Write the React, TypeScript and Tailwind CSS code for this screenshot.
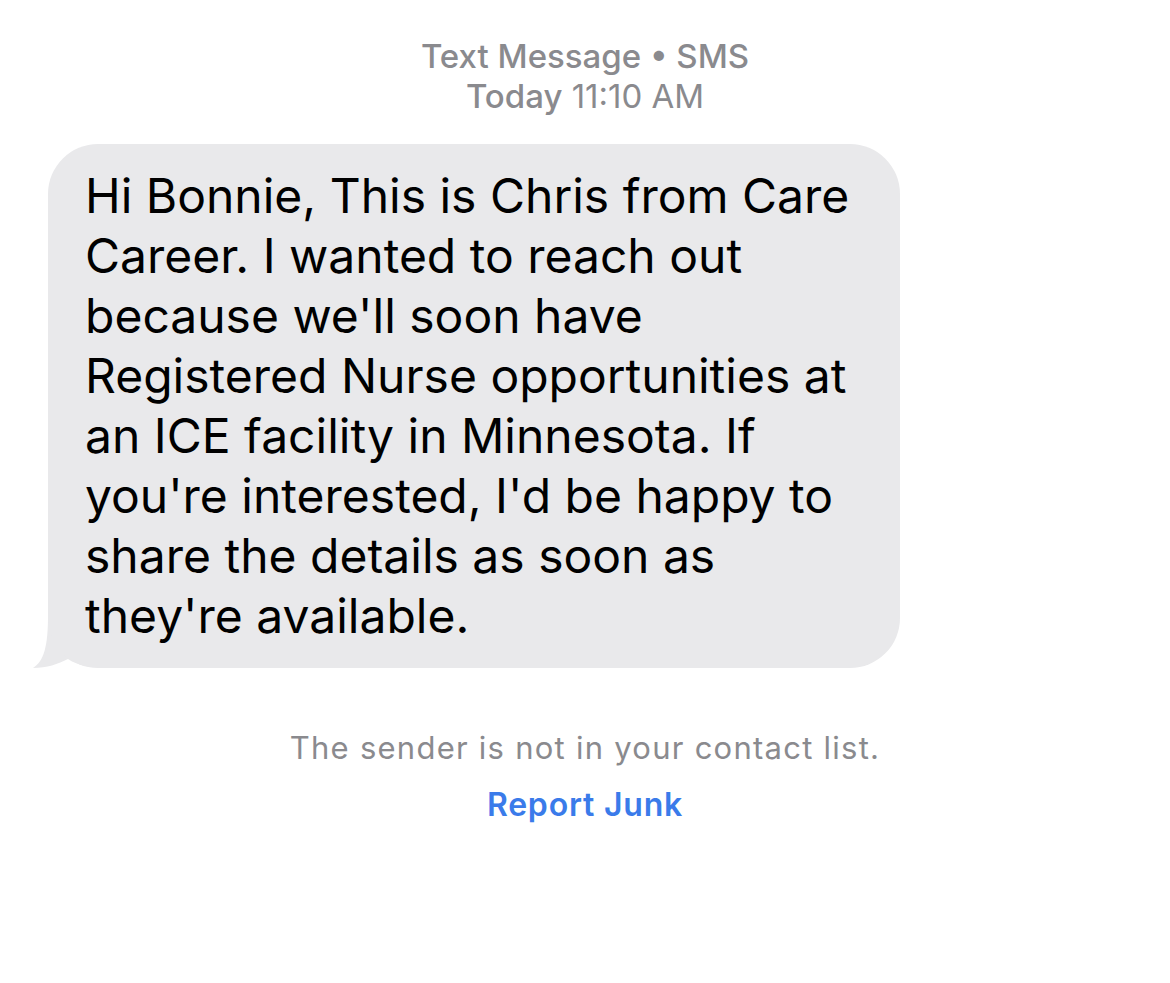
import React from "react";

const lines = [
  "Hi Bonnie, This is Chris from Care",
  "Career. I wanted to reach out",
  "because we'll soon have",
  "Registered Nurse opportunities at",
  "an ICE facility in Minnesota. If",
  "you're interested, I'd be happy to",
  "share the details as soon as",
  "they're available.",
];

export default function App() {
  return (
    <div
      className="w-[1170px] h-[983px] bg-white overflow-hidden"
      style={{ fontFamily: "Inter, 'Noto Sans', sans-serif" }}
    >
      {/* HEADER */}
      <div className="pt-[36px] flex flex-col items-center text-[#8a8a8e] text-[33px] leading-[40px]">
        <div className="font-medium">Text Message • SMS</div>
        <div>
          <span className="font-medium">Today</span> 11:10 AM
        </div>
      </div>

      {/* BUBBLE */}
      <div className="mt-[28px] pl-[48px]">
        <div className="relative w-[852px]">
          {/* tail sits behind the bubble */}
          <svg
            className="absolute left-[-20px] bottom-0"
            width="90"
            height="60"
            viewBox="0 0 90 60"
          >
            <path
              d="M20 8 C20 38 16 53 5 60 C19 60 30 56 40 51 C50 58 65 60 85 60 L85 8 Z"
              fill="#e9e9eb"
            />
          </svg>
          <div className="relative bg-[#e9e9eb] rounded-[50px] pl-[37px] pr-[20px] pt-[22px] pb-[22px] text-black text-[48px] leading-[60px]">
            {lines.map((l) => (
              <div key={l} className="whitespace-nowrap">
                {l}
              </div>
            ))}
          </div>
        </div>
      </div>

      {/* FOOTER */}
      <div className="mt-[61px] flex flex-col items-center">
        <div className="text-[#8a8a8e] text-[31px] leading-[38px] tracking-[1.25px]">
          The sender is not in your contact list.
        </div>
        <div className="mt-[19px] text-[#3a7bea] text-[32px] leading-[38px] font-semibold tracking-[0.8px]">
          Report Junk
        </div>
      </div>
    </div>
  );
}
